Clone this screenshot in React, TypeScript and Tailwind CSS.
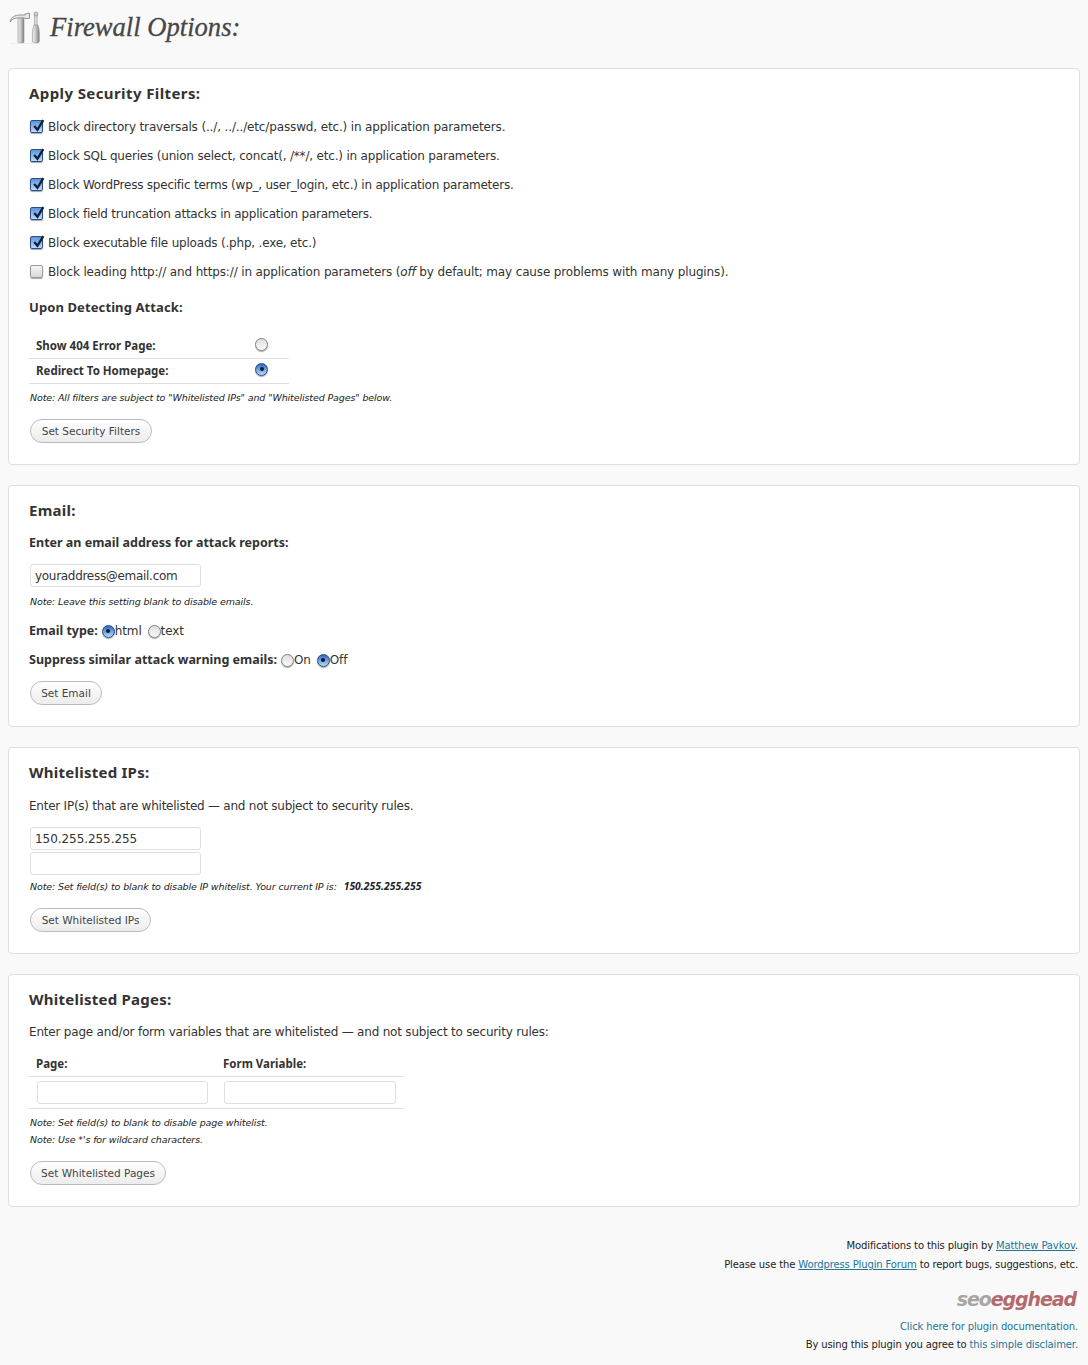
import React from 'react'

const bold = "font-['Noto_Sans',sans-serif] font-bold"

const Check = ({ on }: { on: boolean }) => (
  <span className={`relative mr-[5px] inline-block h-[13px] w-[13px] shrink-0 rounded-[2px] border shadow-[0_1px_1px_rgba(0,0,0,0.35)] ${on ? 'border-[#2b4f86] bg-gradient-to-b from-[#5c93dd] to-[#b9dcf8]' : 'border-[#9a9a9a] bg-gradient-to-b from-[#f4f4f4] to-[#d8d8d8]'}`}>
    {on && (
      <svg viewBox="0 0 14 14" className="absolute -top-[3px] left-0 h-[15px] w-[15px]">
        <path d="M3 7.5 L6 11 L11.5 2" fill="none" stroke="#10203a" strokeWidth="2.2" />
      </svg>
    )}
  </span>
)

const Radio = ({ on, className = '' }: { on: boolean; className?: string }) => (
  <span className={`inline-flex h-[13px] w-[13px] shrink-0 items-center justify-center rounded-full border shadow-[0_1px_1px_rgba(0,0,0,0.35)] ${on ? 'border-[#23477f] bg-gradient-to-b from-[#2f66c4] to-[#b7dcf8]' : 'border-[#7f7f7f] bg-gradient-to-b from-[#dedede] to-[#fafafa]'} ${className}`}>
    {on && <span className="h-[4px] w-[4px] rounded-full bg-[#0c1a30]" />}
  </span>
)

const Card = ({ className, children }: { className: string; children: React.ReactNode }) => (
  <div className={`rounded-[4px] border border-[#dfdfdf] bg-white pl-[20px] ${className}`}>{children}</div>
)

const Heading = ({ children, className = 'tracking-[0.25px]' }: { children: React.ReactNode; className?: string }) => (
  <h3 className={`h-[20px] text-[15px] leading-[20px] text-[#333] ${bold} ${className}`}>{children}</h3>
)

const Note = ({ children, className = '' }: { children: React.ReactNode; className?: string }) => (
  <p className={`pl-[1px] text-[9.5px] leading-[14px] tracking-[-0.12px] text-[#222] italic ${className}`}>{children}</p>
)

const Button = ({ label, width }: { label: string; width: string }) => (
  <button className={`block h-[24px] rounded-[12px] border border-[#bbb] bg-gradient-to-b from-white to-[#ececec] pt-[1px] text-center text-[10.5px] text-[#444] ${width}`}>{label}</button>
)

const Field = ({ value, className = 'leading-[21px]' }: { value?: string; className?: string }) => (
  <div className={`h-[23px] w-[171px] rounded-[3px] border border-[#dfdfdf] bg-white pl-[4px] text-[12px] text-[#333] ${className}`}>{value}</div>
)

const filters = [
  { on: true, track: 'tracking-[-0.14px]', text: <>Block directory traversals (../, ../../etc/passwd, etc.) in application parameters.</> },
  { on: true, track: 'tracking-[-0.19px]', text: <>Block SQL queries (union select, concat(, /**/, etc.) in application parameters.</> },
  { on: true, track: 'tracking-[-0.23px]', text: <>Block WordPress specific terms (wp_, user_login, etc.) in application parameters.</> },
  { on: true, track: 'tracking-[-0.23px]', text: <>Block field truncation attacks in application parameters.</> },
  { on: true, track: 'tracking-[-0.2px]', text: <>Block executable file uploads (.php, .exe, etc.)</> },
  { on: false, track: 'tracking-[-0.14px]', text: <>Block leading http:// and https:// in application parameters (<i>off</i> by default; may cause problems with many plugins).</> },
]

export default function App() {
  return (
    <div className="min-h-[1365px] bg-[#f9f9f9] px-[8px] font-['DejaVu_Sans',sans-serif] text-[#333]">
      <div className="flex h-[68px] items-start pt-[10px] pl-[1px]">
        <svg viewBox="9 10 32 34" className="h-[34px] w-[32px]">
          <defs>
            <linearGradient id="steel" x1="0" x2="1" y1="0" y2="0">
              <stop offset="0" stopColor="#f2f2f2" />
              <stop offset="0.5" stopColor="#c4c4c4" />
              <stop offset="1" stopColor="#808080" />
            </linearGradient>
          </defs>
          {/* hammer */}
          <path d="M10 22 C11 17 15 15 20 15 L25 15 L25 14 L29.5 13 L29.5 18.5 L25 18.5 L25 18 L18 18 C15 18 12 19 10 22 Z" fill="#e6e6e6" stroke="#707070" strokeWidth="0.7" />
          <rect x="18" y="18" width="6" height="25" rx="1.5" fill="url(#steel)" stroke="#8a8a8a" strokeWidth="0.6" />
          {/* screwdriver */}
          <rect x="34.7" y="14" width="2.4" height="12" fill="#ddd" stroke="#808080" strokeWidth="0.5" />
          <circle cx="35.9" cy="14" r="1.9" fill="#d8d8d8" stroke="#777" strokeWidth="0.6" />
          <path d="M34 25 L37.8 25 C39 28 39.3 31 39.3 34 L39.3 41 C39.3 42.5 38 43.2 35.9 43.2 C33.8 43.2 32.4 42.5 32.4 41 L32.4 34 C32.4 31 32.8 28 34 25 Z" fill="url(#steel)" stroke="#8a8a8a" strokeWidth="0.6" />
          <path d="M10 43.5 L40 43.5" stroke="#e8e8e8" strokeWidth="0.7" />
        </svg>
        <h2 className="ml-[9px] font-['Liberation_Serif',serif] text-[26.6px] leading-[34px] text-[#464646] italic [-webkit-text-stroke:0.3px_#464646]">Firewall Options:</h2>
      </div>

      <Card className="h-[397px] pt-[14px]">
        <Heading className="tracking-[0.4px]">Apply Security Filters:</Heading>
        <div className="mt-[9px]">
          {filters.map((f, i) => (
            <div key={i} className={`flex h-[29px] items-center pl-[1px] text-[12px] ${f.track}`}>
              <Check on={f.on} />
              <span>{f.text}</span>
            </div>
          ))}
        </div>
        <p className={`mt-[11px] h-[20px] text-[13px] leading-[20px] tracking-[0.1px] ${bold}`}>Upon Detecting Attack:</p>
        <div className="mt-[17px] w-[260px] text-[11.5px]">
          <div className="flex h-[25px] items-center justify-between border-b border-[#dfdfdf] pr-[21px] pl-[7px]">
            <span className={bold}>Show 404 Error Page:</span>
            <Radio on={false} className="-mt-[4px]" />
          </div>
          <div className="flex h-[25px] items-center justify-between border-b border-[#dfdfdf] pr-[21px] pl-[7px]">
            <span className={bold}>Redirect To Homepage:</span>
            <Radio on className="-mt-[4px]" />
          </div>
        </div>
        <Note className="mt-[7px]">Note: All filters are subject to "Whitelisted IPs" and "Whitelisted Pages" below.</Note>
        <div className="mt-[14px] pl-[1px]">
          <Button label="Set Security Filters" width="w-[122px]" />
        </div>
      </Card>

      <Card className="mt-[20px] h-[242px] pt-[14px]">
        <Heading>Email:</Heading>
        <p className={`mt-[13px] h-[20px] text-[12.5px] leading-[20px] ${bold}`}>Enter an email address for attack reports:</p>
        <Field value="youraddress@email.com" className="mt-[11px] ml-[1px] leading-[22px] tracking-[-0.3px]" />
        <Note className="mt-[8px]">Note: Leave this setting blank to disable emails.</Note>
        <div className="mt-[12px] flex h-[20px] items-center text-[12px] tracking-[-0.14px]">
          <b className={`mr-[4px] text-[12.5px] tracking-normal ${bold}`}>Email type:</b>
          <Radio on />
          <span className="mr-[6px]">html</span>
          <Radio on={false} />
          <span>text</span>
        </div>
        <div className="mt-[9px] flex h-[20px] items-center text-[12px] tracking-[-0.14px]">
          <b className={`mr-[4px] text-[12.5px] tracking-normal ${bold}`}>Suppress similar attack warning emails:</b>
          <Radio on={false} />
          <span className="mr-[6px]">On</span>
          <Radio on />
          <span>Off</span>
        </div>
        <div className="mt-[11px] pl-[1px]">
          <Button label="Set Email" width="w-[72px]" />
        </div>
      </Card>

      <Card className="mt-[20px] h-[207px] pt-[14px]">
        <Heading>Whitelisted IPs:</Heading>
        <p className="mt-[14px] h-[20px] text-[12px] leading-[20px] tracking-[-0.24px]">Enter IP(s) that are whitelisted — and not subject to security rules.</p>
        <Field value="150.255.255.255" className="mt-[11px] ml-[1px] leading-[22px] tracking-[-0.06px]" />
        <Field className="mt-[2px] ml-[1px]" />
        <Note className="mt-[4px] h-[14px] tracking-[-0.05px]">Note: Set field(s) to blank to disable IP whitelist. Your current IP is: <b className="ml-[4px] font-['Noto_Sans',sans-serif] text-[10.3px] font-bold tracking-[0.05px]">150.255.255.255</b></Note>
        <div className="mt-[15px] pl-[1px]">
          <Button label="Set Whitelisted IPs" width="w-[121px]" />
        </div>
      </Card>

      <Card className="mt-[20px] h-[233px] pt-[14px]">
        <Heading>Whitelisted Pages:</Heading>
        <p className="mt-[13px] h-[20px] text-[12px] leading-[20px] tracking-[-0.2px]">Enter page and/or form variables that are whitelisted — and not subject to security rules:</p>
        <div className="mt-[10px] w-[375px] text-[11.5px]">
          <div className="flex h-[25px] items-center border-b border-[#dfdfdf] pl-[7px]">
            <span className={`w-[187px] ${bold}`}>Page:</span>
            <span className={bold}>Form Variable:</span>
          </div>
          <div className="flex h-[32px] items-center gap-[16px] border-b border-[#dfdfdf] pl-[8px]">
            <Field />
            <Field className="w-[172px] leading-[21px]" />
          </div>
        </div>
        <Note className="mt-[7px]">Note: Set field(s) to blank to disable page whitelist.</Note>
        <Note className="mt-[3px]">Note: Use *'s for wildcard characters.</Note>
        <div className="mt-[14px] pl-[1px]">
          <Button label="Set Whitelisted Pages" width="w-[136px]" />
        </div>
      </Card>

      <div className="mt-[29px] pr-[2px] text-right text-[10px] leading-[19px] tracking-[-0.13px] text-[#222]">
        <p>Modifications to this plugin by <a className="text-[#21759b] underline">Matthew Pavkov</a>.</p>
        <p>Please use the <a className="text-[#21759b] underline">Wordpress Plugin Forum</a> to report bugs, suggestions, etc.</p>
        <p className="mt-[13px] h-[24px] pr-[2px] text-[19px] leading-[24px] font-bold tracking-[-1.1px] italic">
          <span className="text-[#a9a5a2]">seo</span><span className="text-[#b46a6c]">egghead</span>
        </p>
        <p className="mt-[6px]"><a className="text-[#21759b]">Click here for plugin documentation.</a></p>
        <p className="leading-[18px]">By using this plugin you agree to <a className="text-[#21759b]">this simple disclaimer.</a></p>
      </div>
    </div>
  )
}
